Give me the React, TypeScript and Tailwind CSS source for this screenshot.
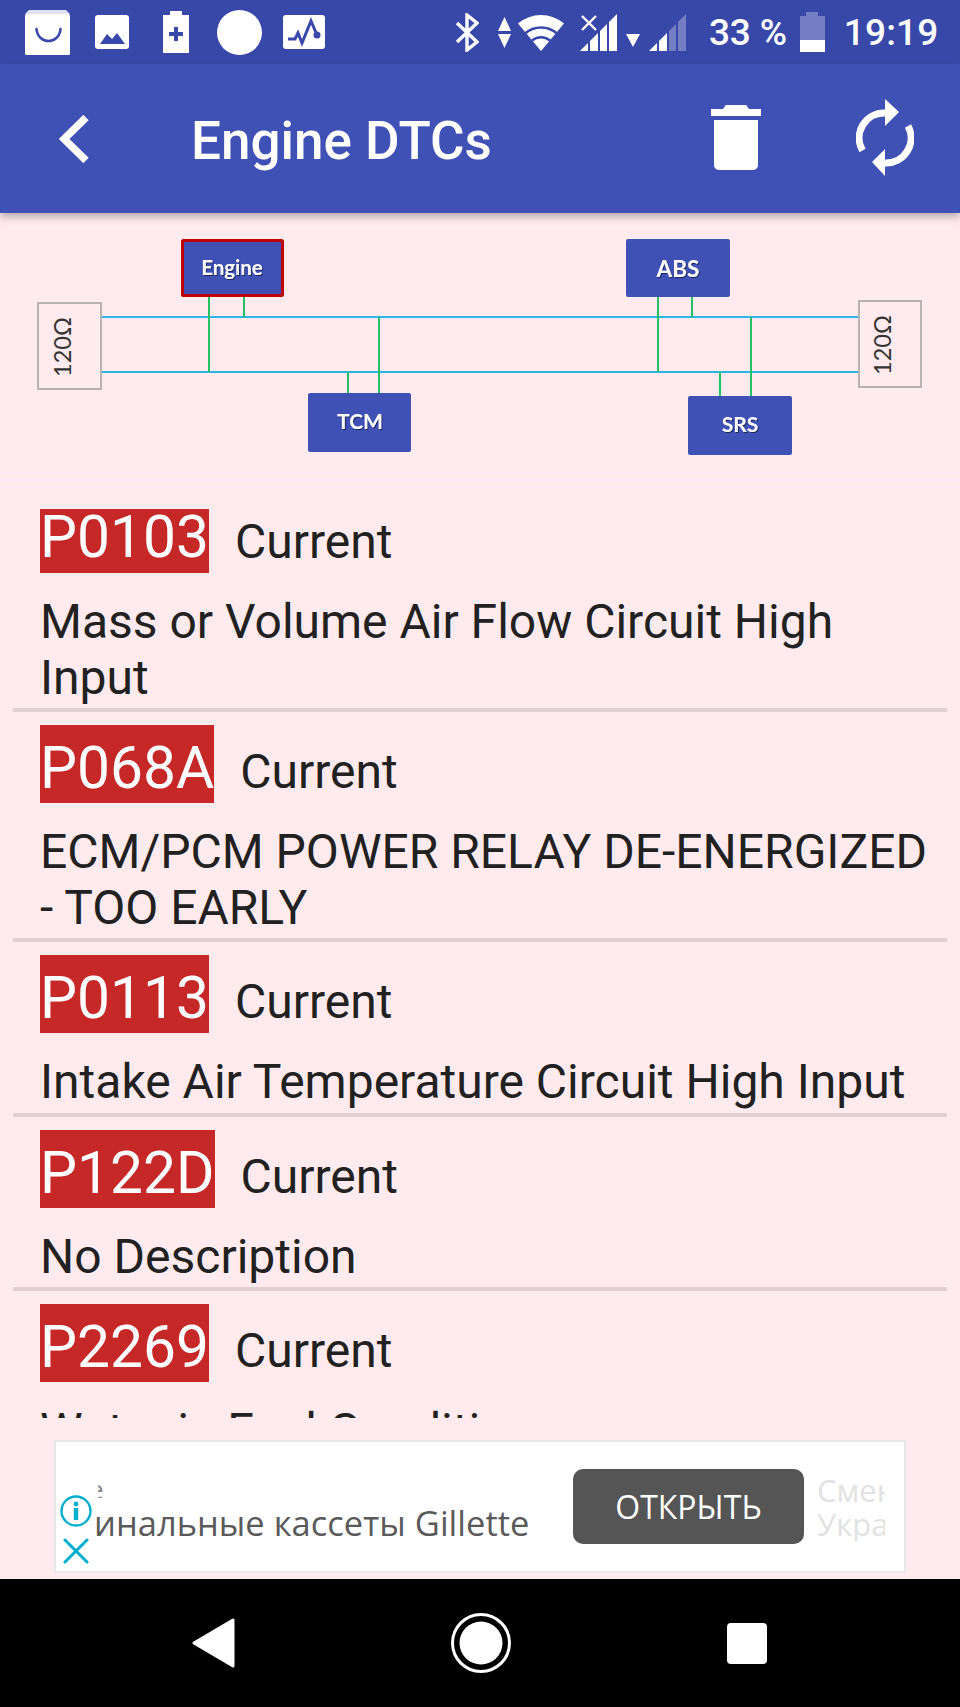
import React from 'react';

const dtcs = [
  { code: 'P0103', desc: 'Mass or Volume Air Flow Circuit High Input', clipped: true },
  { code: 'P068A', desc: 'ECM/PCM POWER RELAY DE-ENERGIZED - TOO EARLY' },
  { code: 'P0113', desc: 'Intake Air Temperature Circuit High Input' },
  { code: 'P122D', desc: 'No Description' },
  { code: 'P2269', desc: 'Water in Fuel Condition', last: true },
];

const BLUE = '#3949ab';

const StatusBar: React.FC = () => (
  <div className="flex h-16 shrink-0 items-center bg-[#3848a9] pl-[25px] text-white">
    {/* shop bag */}
    <svg width="45" height="45" viewBox="0 0 45 45">
      <path d="M4 0H41L45 4H0Z" fill="#dfe2f3" />
      <rect y="4" width="45" height="41" rx="1.5" fill="#fff" />
      <path d="M11.5 19C13 35 34 35 35.5 19" fill="none" stroke={BLUE} strokeWidth="2.6" strokeLinecap="round" />
    </svg>
    {/* image */}
    <svg className="ml-[25px]" width="34" height="34" viewBox="0 0 34 34">
      <rect width="34" height="34" rx="3" fill="#fff" />
      <path d="M5 29L12 19L17 24L22 18L30 29Z" fill={BLUE} />
    </svg>
    {/* battery charging */}
    <svg className="ml-[33px]" width="28" height="42" viewBox="0 0 28 42">
      <path d="M8 0H20V4H27V42H1V4H8Z" fill="#fff" />
      <path d="M12 16H16V21H21V25H16V30H12V25H7V21H12Z" fill={BLUE} />
    </svg>
    <div className="ml-[27px] h-[45px] w-[45px] rounded-full bg-white" />
    {/* pulse */}
    <svg className="ml-[21px]" width="42" height="34" viewBox="0 0 42 34">
      <rect width="42" height="34" rx="3" fill="#fff" />
      <path d="M5 24H12L15 18L19 28L28 6L34 20" fill="none" stroke={BLUE} strokeWidth="3" />
      <circle cx="34" cy="20" r="3.5" fill={BLUE} />
    </svg>
    {/* bluetooth */}
    <svg className="ml-[130px]" width="24" height="39" viewBox="0 0 24 39">
      <path d="M2 10L22 29L12 37V2L22 10L2 29" fill="none" stroke="#fff" strokeWidth="3.4" />
    </svg>
    {/* data arrows */}
    <svg className="ml-[19px]" width="13" height="31" viewBox="0 0 13 31">
      <path d="M6.5 0L13 14H0Z M0 17H13L6.5 31Z" fill="#fff" />
    </svg>
    {/* wifi */}
    <svg className="ml-[7px]" width="46" height="37" viewBox="0 0 46 37">
      <path d="M23 37L0 9.4A36 36 0 0 1 46 9.4Z" fill="#fff" />
      <path d="M7 19.5A24 24 0 0 1 39 19.5" fill="none" stroke="#3848a9" strokeWidth="2.5" />
      <path d="M14 26.5A14 14 0 0 1 32 26.5" fill="none" stroke="#3848a9" strokeWidth="2.5" />
    </svg>
    {/* signal 1 */}
    <svg className="ml-[16px]" width="37" height="37" viewBox="0 0 37 37">
      <path d="M0 37L37 0V37Z" fill="#fff" />
      <path d="M9 37V25M19 37V15M28 37V6" stroke="#3848a9" strokeWidth="2" />
      <path d="M2 2L16 16M16 2L2 16" stroke="#fff" strokeWidth="2.4" />
    </svg>
    <svg className="ml-[9px] mt-[17px]" width="14" height="13" viewBox="0 0 14 13">
      <path d="M0 0H14L7 13Z" fill="#fff" />
    </svg>
    {/* signal 2 */}
    <svg className="ml-[9px]" width="38" height="37" viewBox="0 0 38 37">
      <path d="M0 37L8 29V37ZM10 27L18 19V37H10Z" fill="#fff" />
      <path d="M20 17L27 10V37H20ZM29 8L37 0V37H29Z" fill="#fff" opacity="0.3" />
    </svg>
    <span className="ml-[22px] whitespace-nowrap pt-[1px] font-['Roboto',sans-serif] text-[37px] font-medium tracking-[-0.2px]">33 %</span>
    {/* battery */}
    <svg className="ml-[13px]" width="25" height="40" viewBox="0 0 25 40">
      <path d="M6 0H18V4H25V28H0V4H6Z" fill="#fff" opacity="0.3" />
      <rect y="28" width="25" height="12" fill="#fff" />
    </svg>
    <span className="ml-[19px] whitespace-nowrap pt-[1px] font-['Roboto',sans-serif] text-[37px] font-medium tracking-[0.2px]">19:19</span>
  </div>
);

const Toolbar: React.FC = () => (
  <div className="relative z-10 flex h-[149px] shrink-0 items-center bg-[#3f51b5] pl-[59px] text-white shadow-[0_4px_8px_rgba(0,0,0,0.28)]">
    <svg width="30" height="48" viewBox="0 0 30 48">
      <path d="M27 2.5L5 24L27 45.5" fill="none" stroke="#fff" strokeWidth="7.5" />
    </svg>
    <h1 className="ml-[102px] whitespace-nowrap pt-[6px] font-['Roboto',sans-serif] text-[53px] font-medium leading-[61px]">Engine DTCs</h1>
    <svg className="ml-[219px] -mt-[1px]" width="50" height="66" viewBox="0 0 50 66">
      <path d="M14 1Q14 0 16 0H34Q36 0 36 1L38 4H50V11H0V4H12Z" fill="#fff" />
      <path d="M3 15H47V60Q47 65 41 65H9Q3 65 3 60Z" fill="#fff" />
    </svg>
    <svg className="ml-[95px] -mt-[1px]" width="58" height="78" viewBox="0 0 58 78">
      <path d="M6.5 51.5A25 25 0 0 1 29 14M52 27A25 25 0 0 1 29 64" fill="none" stroke="#fff" strokeWidth="7" />
      <path d="M29 0L43 13L29 27Z M29 50L16 63L29 77Z" fill="#fff" />
    </svg>
  </div>
);

const BusDiagram: React.FC = () => {
  const nodeText = "font-['Lato',sans-serif] font-bold";
  return (
    <div className="h-[268px] shrink-0 border-b-2 border-[#fbeaf4]">
      <svg width="960" height="266" viewBox="0 213 960 266" className="block">
        <defs>
          <filter id="ts" x="-10%" y="-10%" width="120%" height="130%">
            <feDropShadow dx="1" dy="1" stdDeviation="0.6" floodColor="#000" floodOpacity="0.55" />
          </filter>
        </defs>
        <g stroke="#2bb5e8" strokeWidth="2">
          <path d="M101 317H858M101 372H858" />
        </g>
        <g stroke="#24c065" strokeWidth="2" fill="none">
          <path d="M209 297V372M244 297V317M379 317V393M348 372V393M658 297V372M692 297V317M751 317V396M720 372V396" />
        </g>
        <rect x="182.5" y="240.5" width="100" height="55" rx="1" fill="#3f51b5" stroke="#c00000" strokeWidth="3" />
        <rect x="308" y="393" width="103" height="59" rx="2" fill="#3f51b5" />
        <rect x="626" y="239" width="104" height="58" rx="2" fill="#3f51b5" />
        <rect x="688" y="396" width="104" height="59" rx="2" fill="#3f51b5" />
        <g fill="#fff" textAnchor="middle" filter="url(#ts)" className={nodeText}>
          <text x="232" y="275" fontSize="20.5">Engine</text>
          <text x="360" y="429" fontSize="21">TCM</text>
          <text x="678" y="277" fontSize="22.5">ABS</text>
          <text x="740" y="432" fontSize="21">SRS</text>
        </g>
        <rect x="38" y="303" width="63" height="86" fill="none" stroke="#b7b3b3" strokeWidth="2" />
        <rect x="859" y="301" width="62" height="86" fill="none" stroke="#b7b3b3" strokeWidth="2" />
        <g fill="#333" textAnchor="middle" fontSize="23.5" className="font-['Lato',sans-serif]">
          <text transform="translate(69 347) rotate(-90)" y="0" dy="1.5">120Ω</text>
          <text transform="translate(889 345) rotate(-90)" y="0" dy="1.5">120Ω</text>
        </g>
      </svg>
    </div>
  );
};

const DtcRow: React.FC<{ code: string; desc: string; clipped?: boolean; last?: boolean }> = ({ code, desc, clipped, last }) => (
  <div className={clipped ? 'mx-[13px] pl-[27px] pt-[28px]' : 'mx-[13px] pl-[27px] pt-[13px]'}>
    <div className={clipped ? 'flex h-[64px] items-start' : 'flex h-[78px] items-start'}>
      <span
        className={
          clipped
            ? 'h-[64px] overflow-hidden bg-[#c62828] text-[58.7px] leading-[57px] text-white'
            : 'h-[78px] overflow-hidden bg-[#c62828] text-[58.7px] leading-[87px] text-white'
        }
      >
        {code}
      </span>
      <span className={clipped ? 'ml-[26px] text-[48px] leading-[65px] text-[#212121]' : 'ml-[26px] text-[48px] leading-[93px] text-[#212121]'}>Current</span>
    </div>
    <p className="pb-[3px] pt-[21px] text-[48px] leading-[55.5px] text-[#212121]">{desc}</p>
    {!last && <div className="-ml-[27px] h-1 bg-[#e0d0d2]" />}
  </div>
);

const AdBanner: React.FC = () => (
  <div className="relative mx-[54px] mt-[22px] flex h-[133px] shrink-0 items-center border-2 border-[#e8e8ec] bg-white">
    <div className="ml-[38px] flex h-full w-[479px] flex-col overflow-hidden whitespace-nowrap font-['Open_Sans',sans-serif] text-[#5a5a5a]">
      <div className="ml-[4px] mt-[38px] h-[18px] w-[6px] overflow-hidden text-[26px] leading-[18px] text-[#888]">
        <span className="-ml-[9px] block">е</span>
      </div>
      <div className="mt-[5px] text-[34.5px] leading-[40px]">инальные кассеты Gillette</div>
    </div>
    <button className="flex h-[75px] w-[231px] shrink-0 items-center justify-center rounded-[10px] bg-[#555555] font-['Open_Sans',sans-serif] text-[32px] font-medium text-white">
      ОТКРЫТЬ
    </button>
    <div className="ml-[13px] w-[68px] overflow-hidden whitespace-nowrap font-['Open_Sans',sans-serif] text-[31px] leading-[34px] text-[#e2e2e2]">
      Смена
      <br />
      Украина
    </div>
    {/* adchoices */}
    <svg className="absolute left-[4px] top-[53px]" width="32" height="32" viewBox="0 0 32 32">
      <circle cx="16" cy="16" r="14.5" fill="none" stroke="#00aecd" strokeWidth="2.4" />
      <circle cx="16" cy="9" r="2.4" fill="#00aecd" />
      <rect x="13.8" y="13" width="4.4" height="12" fill="#00aecd" />
    </svg>
    <svg className="absolute left-[7px] top-[96px]" width="26" height="26" viewBox="0 0 26 26">
      <path d="M2 2L24 24M24 2L2 24" stroke="#00aecd" strokeWidth="3" strokeLinecap="round" />
    </svg>
  </div>
);

const NavBar: React.FC = () => (
  <div className="mt-[6px] flex h-[128px] shrink-0 items-center bg-black pl-[192px]">
    <svg width="43" height="50" viewBox="0 0 43 50">
      <path d="M41 2V48L2 25Z" fill="#fff" stroke="#fff" strokeWidth="3" strokeLinejoin="round" />
    </svg>
    <svg className="ml-[216px]" width="60" height="60" viewBox="0 0 60 60">
      <circle cx="30" cy="30" r="28.5" fill="none" stroke="#fff" strokeWidth="3" />
      <circle cx="30" cy="30" r="21.5" fill="#fff" />
    </svg>
    <div className="ml-[216px] h-[41px] w-[40px] rounded-[4px] bg-white" />
  </div>
);

export default function App() {
  return (
    <div className="flex h-[1707px] w-[960px] flex-col overflow-hidden bg-[#ffebee] font-['Roboto',sans-serif]">
      <StatusBar />
      <Toolbar />
      <BusDiagram />
      <div className="h-[937px] shrink-0 overflow-hidden">
        {dtcs.map((d) => (
          <DtcRow key={d.code} {...d} />
        ))}
      </div>
      <AdBanner />
      <NavBar />
    </div>
  );
}
